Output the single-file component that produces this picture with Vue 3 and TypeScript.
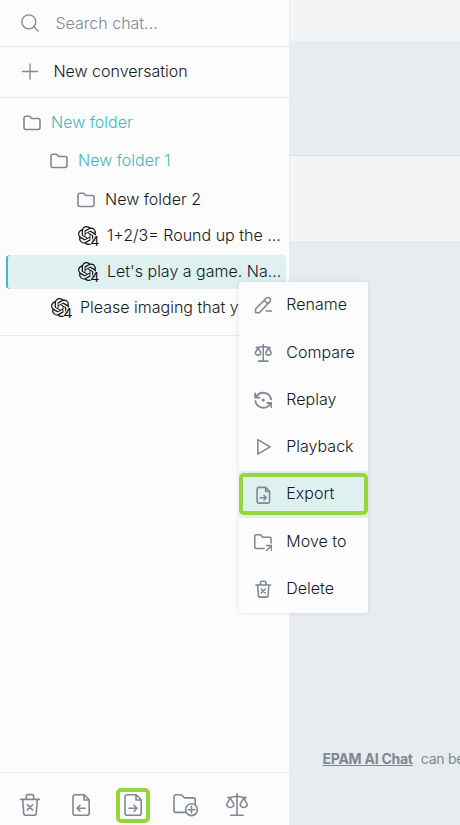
<script setup lang="ts">
interface TreeRow { label: string; level: number; kind: 'folder' | 'chat'; open?: boolean; selected?: boolean }
interface Action { label: string; icon: string; marked?: boolean }

const rows: TreeRow[] = [
  { label: 'New folder', level: 0, kind: 'folder', open: true },
  { label: 'New folder 1', level: 1, kind: 'folder', open: true },
  { label: 'New folder 2', level: 2, kind: 'folder' },
  { label: '1+2/3= Round up the ...', level: 2, kind: 'chat' },
  { label: "Let's play a game. Na...", level: 2, kind: 'chat', selected: true },
  { label: 'Please imaging that you', level: 1, kind: 'chat' },
]
const actions: Action[] = [
  { label: 'Rename', icon: 'pencil' },
  { label: 'Compare', icon: 'scale' },
  { label: 'Replay', icon: 'replay' },
  { label: 'Playback', icon: 'play' },
  { label: 'Export', icon: 'export', marked: true },
  { label: 'Move to', icon: 'move' },
  { label: 'Delete', icon: 'trash' },
]
const tools: Action[] = [
  { label: 'Delete all', icon: 'trash' },
  { label: 'Import', icon: 'import' },
  { label: 'Export', icon: 'export', marked: true },
  { label: 'New folder', icon: 'folder-plus' },
  { label: 'Compare', icon: 'scale' },
]
</script>

<template>
  <div class="screen">
    <svg class="defs" aria-hidden="true">
      <symbol id="folder" viewBox="0 0 18 16"><path d="M3 1.3h3.1c.4 0 .7.1.9.4l1.8 1.8H15a2 2 0 0 1 2 2v7a2 2 0 0 1-2 2H3a2 2 0 0 1-2-2V3.3a2 2 0 0 1 2-2z" /></symbol>
      <symbol id="pencil" viewBox="0 0 24 24"><path d="M2 21.8v-5L15.8 3a3.2 3.2 0 0 1 4.6 0 3.2 3.2 0 0 1 0 4.6L6.8 21.8zM13.3 5.6l4.6 4.6M15.8 19.4h7" /></symbol>
      <symbol id="scale" viewBox="0 0 24 24"><path d="M12 .8v21.4M5.800 22.200h12.400M2.800 4.600C6.200 4.600 9 3.300 12 3.300s5.800 1.300 9.200 1.300M5.300 5.200 2 10.700c-1.500 5 8.100 5 6.600 0zM18.700 5.200l-3.300 5.500c-1.500 5 8.100 5 6.600 0z" /></symbol>
      <symbol id="replay" viewBox="2 2 20 20"><path d="M20.500 11A8.600 8.600 0 0 0 4.500 8.400M3.500 13a8.600 8.600 0 0 0 16 2.600" /><path d="M3.300 4.600v4.600h4.600M20.700 19.400v-4.600h-4.600" /><circle class="solid" cx="12" cy="12" r="1.600" /></symbol>
      <symbol id="play" viewBox="0 0 24 24"><path d="M5 2v19l15.800-9.500z" /></symbol>
      <symbol id="export" viewBox="0 0 24 24"><path d="M6 1.800h9.200l5 5v13.400a2 2 0 0 1-2 2H6a2 2 0 0 1-2-2V3.800a2 2 0 0 1 2-2zM15 2v5h5M8 15.200h8M13 12.200l3 3-3 3" /></symbol>
      <symbol id="import" viewBox="0 0 24 24"><path d="M6 1.800h9.200l5 5v13.400a2 2 0 0 1-2 2H6a2 2 0 0 1-2-2V3.800a2 2 0 0 1 2-2zM15 2v5h5M8 15.200h8M11 12.200l-3 3 3 3" /></symbol>
      <symbol id="move" viewBox="0 0 24 24"><path d="M13 20.200H3a2 2 0 0 1-2-2v-14a2 2 0 0 1 2-2h5.200l3.200 3.200h8.800a2 2 0 0 1 2 2v5.500M16 23l6.500-6.500M16.500 16.200h6.200v6.200" /></symbol>
      <symbol id="trash" viewBox="0 0 24 24"><path d="M2.500 6.400h19M8.300 6.400V3.600a2 2 0 0 1 2-2h3.400a2 2 0 0 1 2 2v2.800M4.700 6.400l1 13.900a2 2 0 0 0 2 1.900h8.600a2 2 0 0 0 2-1.900l1-13.900M9.400 11.700l5.200 5.200M14.600 11.700l-5.200 5.200" /></symbol>
      <symbol id="folder-plus" viewBox="0 0 26 24"><path d="M12.800 19.400H3a2 2 0 0 1-2-2V3.800a2 2 0 0 1 2-2h4.600a2 2 0 0 1 1.300.5l2.600 2.600h8.700a2 2 0 0 1 2 2v4.300" /><circle cx="18.500" cy="16.700" r="5.900" /><path d="M18.500 13.400V20M15.200 16.700h6.600" /></symbol>
      <symbol id="gpt" viewBox="0 0 24 24"><path d="M22.282 9.821a5.985 5.985 0 0 0-.516-4.910 6.046 6.046 0 0 0-6.510-2.900A6.065 6.065 0 0 0 4.981 4.182a5.985 5.985 0 0 0-3.998 2.900 6.046 6.046 0 0 0 .743 7.097 5.980 5.980 0 0 0 .510 4.911 6.051 6.051 0 0 0 6.515 2.900A5.985 5.985 0 0 0 13.260 24a6.056 6.056 0 0 0 5.772-4.206 5.990 5.990 0 0 0 3.998-2.900 6.056 6.056 0 0 0-.747-7.073zM13.260 22.430a4.476 4.476 0 0 1-2.876-1.040l.141-.081 4.779-2.758a.795.795 0 0 0 .393-.681v-6.737l2.020 1.169a.071.071 0 0 1 .038.052v5.583a4.504 4.504 0 0 1-4.495 4.493zM3.600 18.304a4.470 4.470 0 0 1-.535-3.014l.142.085 4.783 2.759a.771.771 0 0 0 .780 0l5.843-3.369v2.332a.080.080 0 0 1-.033.062L9.740 19.950a4.500 4.500 0 0 1-6.140-1.646zM2.341 7.896a4.485 4.485 0 0 1 2.366-1.973v5.677a.766.766 0 0 0 .388.677l5.815 3.354-2.020 1.169a.076.076 0 0 1-.071 0L3.988 14.013A4.504 4.504 0 0 1 2.341 7.896zM18.938 11.752l-5.843-3.388L15.115 7.200a.076.076 0 0 1 .071 0l4.830 2.791a4.494 4.494 0 0 1-.676 8.105v-5.678a.790.790 0 0 0-.402-.666zM20.948 8.728l-.142-.085-4.774-2.782a.776.776 0 0 0-.785 0L9.409 9.230V6.897a.066.066 0 0 1 .028-.061l4.830-2.787a4.500 4.500 0 0 1 6.681 4.679zM8.307 12.863l-2.020-1.164a.080.080 0 0 1-.038-.057V6.074a4.500 4.500 0 0 1 7.376-3.453l-.142.080L8.704 5.460a.795.795 0 0 0-.393.681zM9.404 10.498l2.602-1.500 2.607 1.500v2.999l-2.597 1.500-2.607-1.500z" fill-rule="evenodd" /></symbol>
    </svg>

    <aside class="sidebar">
      <div class="search">
        <svg class="glyph" viewBox="0 0 18 18"><circle cx="7.800" cy="7.800" r="7" /><path d="M12.800 12.800 17 17" /></svg>
        <span>Search chat...</span>
      </div>
      <div class="create">
        <svg class="glyph" viewBox="0 0 18 18"><path d="M9 2v15M1.500 9.500h15" /></svg>
        <span>New conversation</span>
      </div>
      <div class="tree">
        <div v-for="row in rows" :key="row.label" class="row" :class="[row.kind, 'level-' + row.level, { open: row.open, selected: row.selected }]">
          <svg v-if="row.kind === 'folder'" class="folder-icon"><use href="#folder" /></svg>
          <span v-else class="model"><svg class="gpt-icon"><use href="#gpt" /></svg><span class="version">4</span></span>
          <span class="label">{{ row.label }}</span>
        </div>
      </div>
      <div class="toolbar">
        <span v-for="tool in tools" :key="tool.label" class="tool" :class="{ marked: tool.marked }">
          <svg :class="{ wide: tool.icon === 'folder-plus' }"><use :href="'#' + tool.icon" /></svg>
        </span>
      </div>
    </aside>

    <main class="page">
      <div class="header"></div>
      <div class="question"></div>
      <div class="answer"></div>
      <div class="footer"><a>EPAM AI Chat</a><span>can be</span></div>
    </main>

    <div class="menu">
      <div v-for="action in actions" :key="action.label" class="action" :class="{ marked: action.marked }">
        <svg><use :href="'#' + action.icon" /></svg>
        <span>{{ action.label }}</span>
      </div>
    </div>
  </div>
</template>

<style>
body { overflow: hidden; }
</style>

<style scoped>
* { box-sizing: border-box; }
.screen {
  position: relative;
  display: flex;
  width: 460px;
  height: 825px;
  overflow: hidden;
  background: #e8ecef;
  color: #141a23;
  font: 300 16px/24px Inter, sans-serif;
  white-space: nowrap;
}
.defs { position: absolute; width: 0; height: 0; }
svg { flex: none; fill: none; stroke: #7f8792; stroke-linecap: round; stroke-linejoin: round; }
.solid { fill: #7f8792; stroke: none; }
.sidebar {
  display: flex;
  flex-direction: column;
  width: 290px;
  flex: none;
  background: #fcfcfc;
  border-right: 1px solid #e8ecef;
}
.search, .create { display: flex; align-items: center; border-bottom: 1px solid #e6e9eb; }
.search { height: 47px; padding-left: 21px; gap: 16.5px; color: #7f8792; }
.create { height: 51px; padding-left: 21px; gap: 14.4px; padding-bottom: 2px; }
.glyph { width: 18px; height: 18px; stroke-width: 1.3; }
.tree { display: flex; flex-direction: column; height: 238px; padding-top: 5px; border-bottom: 1px solid #e6e9eb; }
.row { display: flex; align-items: center; flex: none; }
.folder { height: 38.33px; gap: 10px; }
.folder.level-0 { padding-left: 23px; }
.folder.level-1 { padding-left: 50px; }
.folder.level-2 { padding-left: 77px; }
.folder-icon { width: 18px; height: 16px; margin-top: 2px; stroke-width: 1.6; }
.open { color: #3fb8bd; }
.chat { height: 34px; margin: 1px 3px 1px 6px; gap: 9px; border-left: 2px solid transparent; border-radius: 4px; }
.chat .label { margin-top: -1px; }
.chat.level-1 { padding-left: 43px; }
.chat.level-2 { padding-left: 70px; }
.selected { background: #def1f0; border-left-color: #40bbbd; }
.model { position: relative; width: 20px; height: 20px; flex: none; }
.gpt-icon { display: block; width: 19px; height: 19px; fill: #111; stroke: none; }
.version {
  position: absolute;
  right: -1px;
  bottom: -2px;
  font: 500 15px/15px "Liberation Sans", sans-serif;
  color: #111;
  text-shadow: -1px 0 #fcfcfc, 0 -1px #fcfcfc;
}
.selected .version { text-shadow: -1px 0 #def1f0, 0 -1px #def1f0; }
.toolbar { display: flex; align-items: center; margin-top: auto; height: 53px; padding: 12px 0 0 12.5px; border-top: 1px solid #e6e9eb; gap: 17.800px; }
.tool { position: relative; display: flex; align-items: center; justify-content: center; width: 34px; height: 35px; }
.tool svg { width: 24px; height: 24px; stroke-width: 1.6; }
.tool svg.wide { width: 26px; margin-left: 2px; }
.marked::after { content: ''; position: absolute; inset: 0; border: 4px solid #94d73c; border-radius: 5px; }
.page { display: flex; flex: 1; flex-direction: column; min-width: 0; }
.header { height: 41px; background: #f3f4f6; }
.question { height: 114px; }
.answer { height: 88px; background: #f3f4f6; border: solid #dce0e4; border-width: 1px 0; }
.footer { display: flex; gap: 8px; margin-top: auto; padding: 0 0 54px 32.5px; font-size: 14px; font-weight: 400; letter-spacing: -.25px; color: #7f8792; }
.footer a { font-weight: 700; text-decoration: underline; }
.menu {
  position: absolute;
  left: 239px;
  top: 282px;
  width: 129px;
  height: 331px;
  display: grid;
  grid-template-rows: repeat(7, 1fr);
  background: #fcfcfc;
  border-radius: 3px;
  box-shadow: 0 0 5px rgba(30, 45, 60, .12);
}
.action { position: relative; display: flex; align-items: center; gap: 14.300px; padding-left: 14.5px; }
.action svg { width: 18.500px; height: 18.500px; stroke-width: 2; }
.action span { margin-top: -2.600px; }
.action.marked { background: #def1f0; }
.action.marked::after { inset: 2px 0 3px; }
</style>
